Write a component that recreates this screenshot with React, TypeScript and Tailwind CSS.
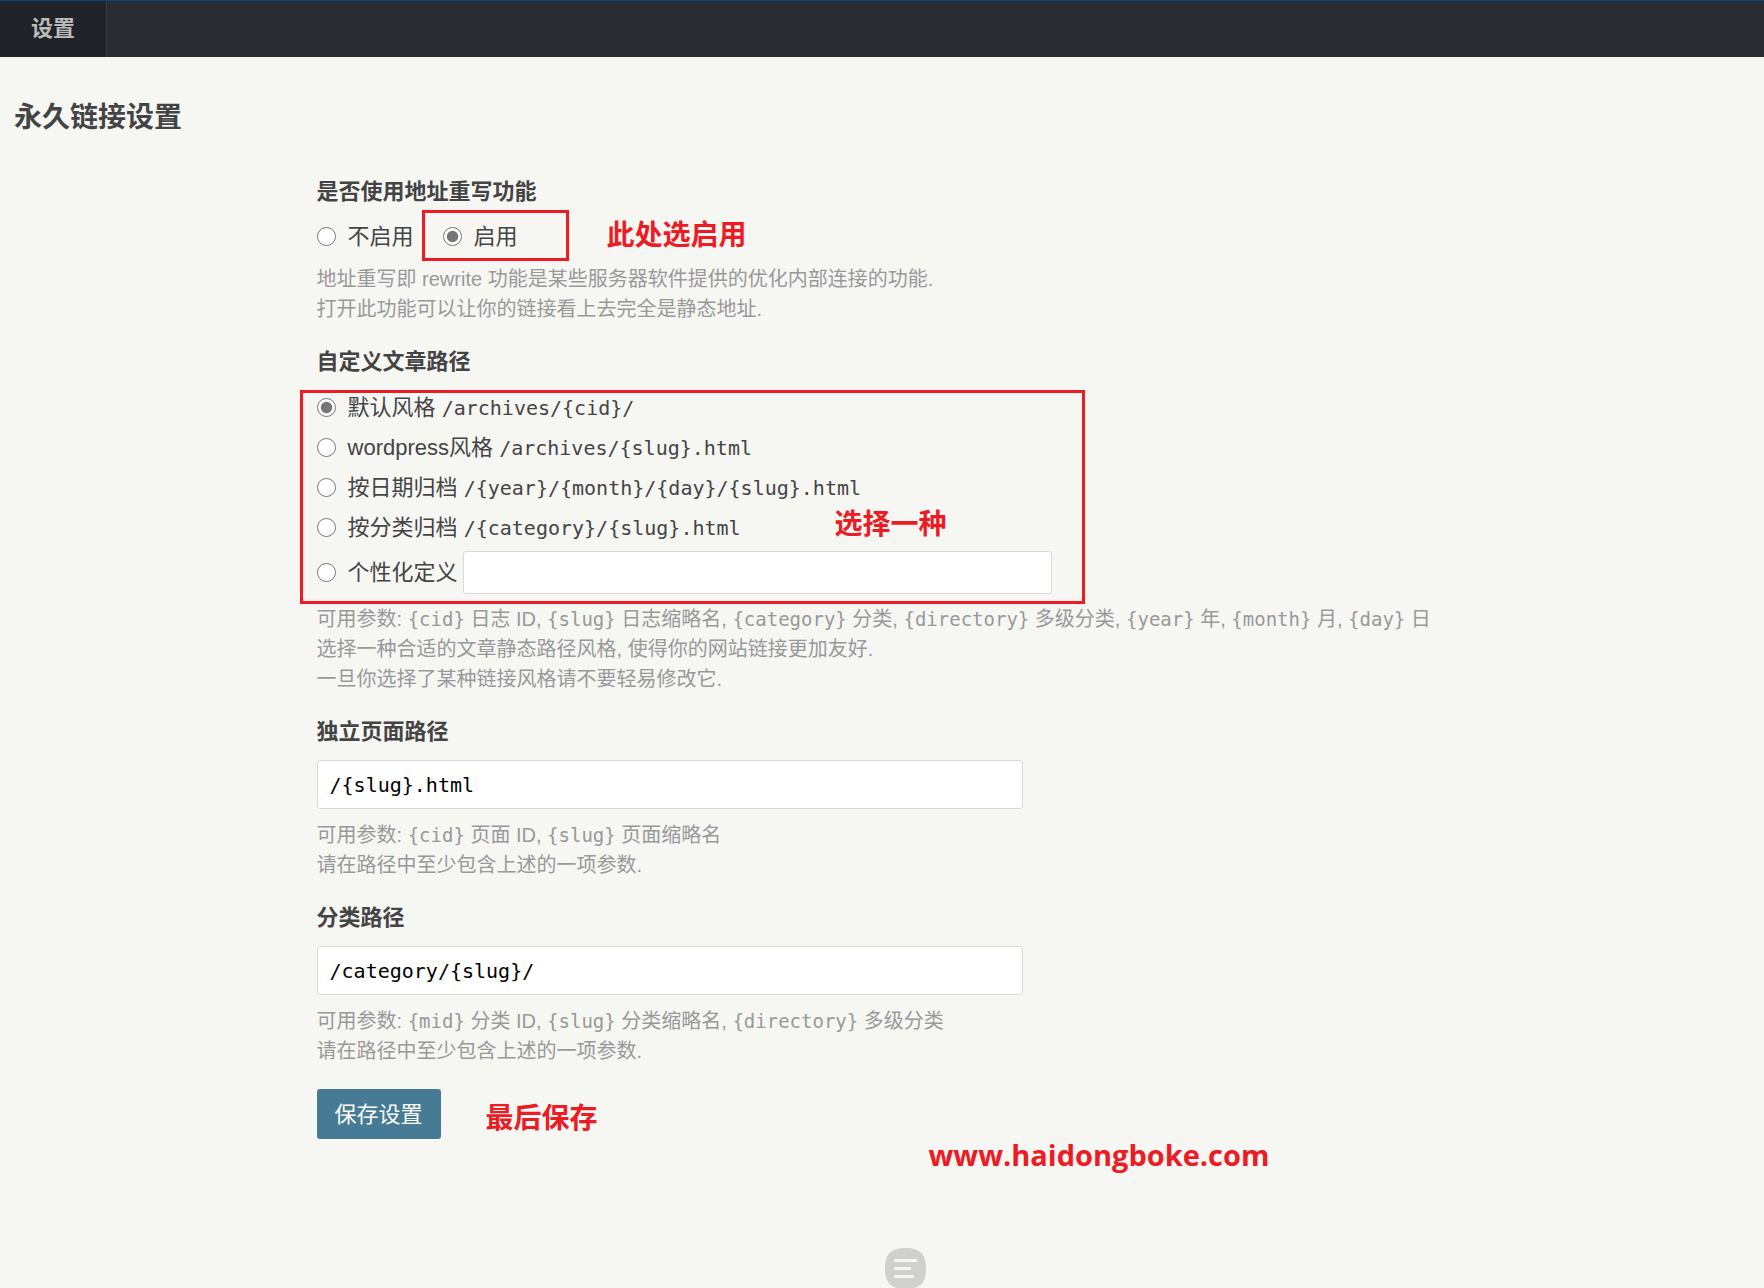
import { useState } from "react"
import type { ReactNode } from "react"

interface PathOption {
  id: string
  label: string
  pattern: string
}

const postPaths: PathOption[] = [
  { id: "default", label: "默认风格", pattern: "/archives/{cid}/" },
  { id: "wordpress", label: "wordpress风格", pattern: "/archives/{slug}.html" },
  { id: "date", label: "按日期归档", pattern: "/{year}/{month}/{day}/{slug}.html" },
  { id: "category", label: "按分类归档", pattern: "/{category}/{slug}.html" }
]

const radioClass = "w-[19px] h-[19px] shrink-0 accent-[#767676]"

const inputClass =
  "block rounded-[3px] border border-[#d9d9d6] bg-white px-3 font-['DejaVu_Sans_Mono','Noto_Sans_CJK_SC',monospace] text-[20px] text-black"

function Code({ children }: { children: ReactNode }) {
  return (
    <code className="font-['DejaVu_Sans_Mono',monospace] text-[19px] leading-none">
      {children}
    </code>
  )
}

function Description({ children }: { children: ReactNode }) {
  return <p className="text-[20px] leading-[30px] text-[#999]">{children}</p>
}

// Red hints that sit over the form
function Note({ className, children }: { className: string; children: ReactNode }) {
  return (
    <span
      className={`absolute whitespace-nowrap font-['Open_Sans','Noto_Sans_CJK_SC',sans-serif] leading-10 font-bold text-[#ed1c24] ${className}`}
    >
      {children}
    </span>
  )
}

export default function App() {
  const [rewrite, setRewrite] = useState("1")
  const [postPath, setPostPath] = useState("default")
  const [customPath, setCustomPath] = useState("")
  const [pagePath, setPagePath] = useState("/{slug}.html")
  const [categoryPath, setCategoryPath] = useState("/category/{slug}/")

  return (
    <div className="min-h-screen bg-[#f6f6f3] font-['Liberation_Sans','Noto_Sans_CJK_SC',sans-serif] text-[#444]">
      {/* Top bar */}
      <header className="h-[57px] border-t border-[#004a80] bg-[#292d33]">
        <nav className="flex h-full">
          <a
            href="#"
            className="flex items-center border-r border-[#383d45] bg-[#202328] px-[31px] pb-[2px] text-[22px] font-bold text-[#bbb]"
          >
            设置
          </a>
        </nav>
      </header>

      <main className="pt-[41px]">
        <h1 className="px-[14px] text-[28px] leading-10 font-bold">永久链接设置</h1>

        <form
          className="mt-[39px] ml-[calc(18%-1px)] flex flex-col gap-[23px] text-[22px]"
          onSubmit={(e) => e.preventDefault()}
        >
          {/* Rewrite switch */}
          <fieldset>
            <legend className="leading-[30px] font-bold">是否使用地址重写功能</legend>
            <div className="mt-[9px] mb-2 flex h-10 items-center gap-[29px]">
              <label className="flex items-center gap-3">
                <input
                  type="radio"
                  name="rewrite"
                  value="0"
                  checked={rewrite === "0"}
                  onChange={() => setRewrite("0")}
                  className={radioClass}
                />
                不启用
              </label>
              <label className="relative flex items-center gap-3">
                <input
                  type="radio"
                  name="rewrite"
                  value="1"
                  checked={rewrite === "1"}
                  onChange={() => setRewrite("1")}
                  className={radioClass}
                />
                启用
                <span className="absolute -top-[10px] -left-[21px] h-[51px] w-[147px] border-3 border-[#ed1c24]" />
                <Note className="-top-[6px] left-[164px] text-[28px]">此处选启用</Note>
              </label>
            </div>
            <Description>
              地址重写即 rewrite 功能是某些服务器软件提供的优化内部连接的功能.
              <br />
              打开此功能可以让你的链接看上去完全是静态地址.
            </Description>
          </fieldset>

          {/* Post path */}
          <fieldset>
            <legend className="leading-[30px] font-bold">自定义文章路径</legend>
            <div className="relative mt-[10px] mb-[10px]">
              {postPaths.map((option) => (
                <label key={option.id} className="flex h-10 items-center gap-3">
                  <input
                    type="radio"
                    name="postPattern"
                    value={option.pattern}
                    checked={postPath === option.id}
                    onChange={() => setPostPath(option.id)}
                    className={radioClass}
                  />
                  <span>
                    {option.label}{" "}
                    <code className="font-['DejaVu_Sans_Mono',monospace] text-[20px] leading-none">
                      {option.pattern}
                    </code>
                  </span>
                </label>
              ))}
              <div className="mt-1 flex items-center gap-[5px]">
                <label className="flex shrink-0 items-center gap-3">
                  <input
                    type="radio"
                    name="postPattern"
                    value="custom"
                    checked={postPath === "custom"}
                    onChange={() => setPostPath("custom")}
                    className={radioClass}
                  />
                  个性化定义
                </label>
                <input
                  type="text"
                  aria-label="个性化定义"
                  value={customPath}
                  onChange={(e) => setCustomPath(e.target.value)}
                  className={`${inputClass} h-[43px] w-full max-w-[589px]`}
                />
              </div>
              <div className="pointer-events-none absolute top-[3px] -bottom-[10px] -left-[17px] w-[785px] border-3 border-[#ed1c24]">
                <Note className="top-[110px] left-[532px] text-[28px]">选择一种</Note>
              </div>
            </div>
            <Description>
              可用参数: <Code>{"{cid}"}</Code> 日志 ID, <Code>{"{slug}"}</Code> 日志缩略名,{" "}
              <Code>{"{category}"}</Code> 分类, <Code>{"{directory}"}</Code> 多级分类,{" "}
              <Code>{"{year}"}</Code> 年, <Code>{"{month}"}</Code> 月, <Code>{"{day}"}</Code> 日
              <br />
              选择一种合适的文章静态路径风格, 使得你的网站链接更加友好.
              <br />
              一旦你选择了某种链接风格请不要轻易修改它.
            </Description>
          </fieldset>

          {/* Page path */}
          <div>
            <label htmlFor="pagePattern" className="block leading-[30px] font-bold">
              独立页面路径
            </label>
            <input
              id="pagePattern"
              type="text"
              value={pagePath}
              onChange={(e) => setPagePath(e.target.value)}
              className={`${inputClass} mt-[13px] mb-[11px] h-[49px] w-full max-w-[706px]`}
            />
            <Description>
              可用参数: <Code>{"{cid}"}</Code> 页面 ID, <Code>{"{slug}"}</Code> 页面缩略名
              <br />
              请在路径中至少包含上述的一项参数.
            </Description>
          </div>

          {/* Category path */}
          <div>
            <label htmlFor="categoryPattern" className="block leading-[30px] font-bold">
              分类路径
            </label>
            <input
              id="categoryPattern"
              type="text"
              value={categoryPath}
              onChange={(e) => setCategoryPath(e.target.value)}
              className={`${inputClass} mt-[13px] mb-[11px] h-[49px] w-full max-w-[706px]`}
            />
            <Description>
              可用参数: <Code>{"{mid}"}</Code> 分类 ID, <Code>{"{slug}"}</Code> 分类缩略名,{" "}
              <Code>{"{directory}"}</Code> 多级分类
              <br />
              请在路径中至少包含上述的一项参数.
            </Description>
          </div>

          <div className="relative">
            <button
              type="submit"
              className="block h-[50px] rounded-[3px] bg-[#467b96] px-[18px] text-white"
            >
              保存设置
            </button>
            <Note className="top-2 left-[169px] text-[28px]">最后保存</Note>
            <Note className="top-[46px] left-[612px] text-[29px]">www.haidongboke.com</Note>
          </div>
        </form>
      </main>

      {/* Floating menu */}
      <button
        type="button"
        aria-label="菜单"
        className="fixed -bottom-px left-1/2 ml-[3px] h-[41px] w-[41px]"
      >
        <svg viewBox="0 0 41 41" className="h-full w-full">
          <path
            d="M20.5 0C35 0 41 6 41 20.5S35 41 20.5 41 0 35 0 20.5 6 0 20.5 0Z"
            fill="#d0d0ce"
          />
          <path d="M9 11h23v3H9zM9 19h17v3H9zM9 27h20v3H9z" fill="#f6f6f3" />
        </svg>
      </button>
    </div>
  )
}
